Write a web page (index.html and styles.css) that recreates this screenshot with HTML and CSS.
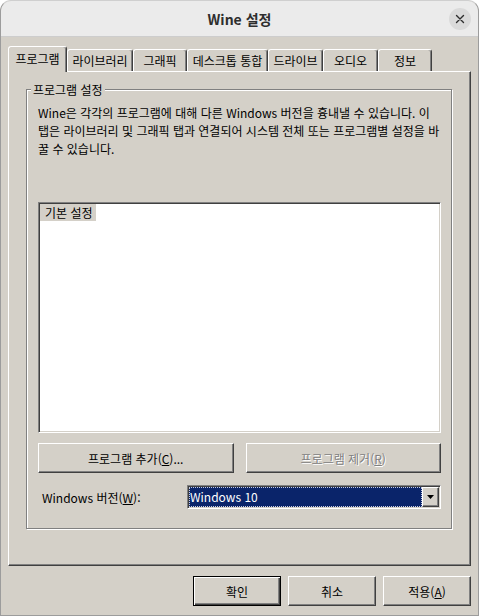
FILE: index.html
```html
<!DOCTYPE html>
<html lang="ko">
<head>
<meta charset="utf-8">
<title>Wine 설정</title>
<link rel="stylesheet" href="styles.css">
</head>
<body>
<div class="window">
  <header class="titlebar">
    <span class="title">Wine 설정</span>
    <button class="close" aria-label="닫기">
      <svg width="10" height="10" viewBox="0 0 10 10"><path d="M1.5 1.5 L8.5 8.5 M8.5 1.5 L1.5 8.5" stroke="#2e2e2e" stroke-width="1.4" stroke-linecap="round" fill="none"/></svg>
    </button>
  </header>
  <div class="client">
    <div class="tabs">
      <div class="tab tab-active">프로그램</div>
      <div class="tab">라이브러리</div>
      <div class="tab">그래픽</div>
      <div class="tab">데스크톱 통합</div>
      <div class="tab">드라이브</div>
      <div class="tab">오디오</div>
      <div class="tab">정보</div>
    </div>
    <div class="panel">
      <div class="group">
        <div class="group-title">프로그램 설정</div>
        <p class="desc">
          <span>Wine은 각각의 프로그램에 대해 다른 Windows 버전을 흉내낼 수 있습니다. 이</span>
          <span>탭은 라이브러리 및 그래픽 탭과 연결되어 시스템 전체 또는 프로그램별 설정을 바</span>
          <span>꿀 수 있습니다.</span>
        </p>
        <div class="listbox">
          <div class="item">기본 설정</div>
        </div>
        <div class="btn-row">
          <button class="btn">프로그램 추가(<u>C</u>)...</button>
          <button class="btn btn-disabled">프로그램 제거(<u>R</u>)</button>
        </div>
        <div class="ver-row">
          <span class="ver-label">Windows 버전(<u>W</u>):</span>
          <div class="combo">
            <span class="combo-value">Windows 10</span>
            <span class="combo-btn">
              <svg width="7" height="4" viewBox="0 0 7 4"><path d="M0 0 H7 L3.5 4 Z" fill="#000"/></svg>
            </span>
          </div>
        </div>
      </div>
    </div>
    <div class="dialog-buttons">
      <button class="btn dlg-btn btn-default">확인</button>
      <button class="btn dlg-btn">취소</button>
      <button class="btn dlg-btn">적용(<u>A</u>)</button>
    </div>
  </div>
</div>
</body>
</html>
```
FILE: styles.css
```css
html, body {
  margin: 0;
  background: #ffffff;
}
body {
  font-family: "Noto Sans CJK KR", "Noto Sans", sans-serif;
  font-size: 12px;
  color: #000;
}
.window {
  width: 479px;
  height: 616px;
  box-sizing: border-box;
  border: 1px solid #9c9c9c;
  border-top-color: #cfcfcf;
  border-radius: 11px 11px 0 0;
  background: #d4d0c8;
  overflow: hidden;
  display: flex;
  flex-direction: column;
}
.titlebar {
  height: 36px;
  box-sizing: border-box;
  flex: none;
  border-bottom: 1px solid #cdcdcd;
  background: #ebebeb;
  display: grid;
  grid-template-columns: 1fr auto 1fr;
  align-items: center;
}
.title {
  grid-column: 2;
  font-weight: bold;
  font-size: 14px;
  color: #2e2e2e;
}
.close {
  grid-column: 3;
  justify-self: end;
  width: 22px;
  height: 22px;
  margin-right: 7px;
  padding: 0;
  border: 0;
  border-radius: 50%;
  background: #dadada;
  display: flex;
  align-items: center;
  justify-content: center;
}
.client {
  flex: 1;
  padding: 9px 7px 0;
  display: flex;
  flex-direction: column;
}
.tabs {
  display: flex;
  align-items: flex-end;
  height: 25px;
}
.tab {
  box-sizing: border-box;
  flex: none;
  height: 22px;
  border: 1px solid;
  border-bottom: 0;
  border-color: #fff #404040 transparent #fff;
  border-radius: 3px 3px 0 0;
  box-shadow: inset -1px 0 #808080;
  display: flex;
  align-items: center;
  justify-content: center;
  white-space: nowrap;
}
.tab:nth-child(1) { width: 59px; }
.tab:nth-child(2) { width: 66px; }
.tab:nth-child(3) { width: 54px; }
.tab:nth-child(4) { width: 81px; }
.tab:nth-child(5) { width: 55px; }
.tab:nth-child(6) { width: 55px; }
.tab:nth-child(7) { width: 54px; }
.tab-active {
  height: 26px;
  margin-bottom: -1px;
  padding-bottom: 2px;
  position: relative;
  z-index: 1;
  background: #d4d0c8;
}
.panel {
  box-sizing: border-box;
  height: 495px;
  flex: none;
  border: 1px solid;
  border-color: #fff #404040 #404040 #fff;
  box-shadow: inset -1px -1px #808080;
  padding: 17px 18px 0 17px;
}
.group {
  border: 1px solid #808080;
  box-shadow: inset 1px 1px #fff, 1px 1px #fff;
  padding: 0 10px 19px 11px;
  display: flex;
  flex-direction: column;
}
.group-title {
  align-self: flex-start;
  margin: -8px 0 0 -7px;
  padding: 0 2px;
  line-height: 16px;
  background: #d4d0c8;
}
.desc {
  margin: 6px 0 0;
  line-height: 18px;
}
.desc span {
  display: block;
  white-space: nowrap;
}
.listbox {
  margin-top: 44px;
  height: 231px;
  box-sizing: border-box;
  background: #fff;
  border: 1px solid;
  border-color: #808080 #fff #fff #808080;
  box-shadow: inset 1px 1px #404040, inset -1px -1px #d4d0c8;
  padding: 1px;
}
.item {
  display: inline-block;
  background: #d4d0c8;
  padding: 0 3px 0 5px;
  line-height: 17px;
}
.btn-row {
  display: grid;
  grid-template-columns: 1fr 1fr;
  gap: 12px;
  margin-top: 10px;
}
.btn {
  height: 30px;
  box-sizing: border-box;
  padding: 0;
  font: inherit;
  color: #000;
  background: #d4d0c8;
  border: 1px solid;
  border-color: #fff #404040 #404040 #fff;
  box-shadow: inset -1px -1px #808080;
}
.btn-disabled {
  color: #808080;
  text-shadow: 1px 1px #fff;
}
.ver-row {
  display: flex;
  align-items: center;
  height: 24px;
  margin-top: 12px;
}
.ver-label {
  flex: none;
  width: 149px;
  box-sizing: border-box;
  padding-left: 4px;
  white-space: nowrap;
}
.combo {
  flex: 1;
  height: 24px;
  box-sizing: border-box;
  display: flex;
  background: #fff;
  border: 1px solid;
  border-color: #808080 #fff #fff #808080;
  box-shadow: inset 1px 1px #404040, inset -1px -1px #d4d0c8;
  padding: 1px;
}
.combo-value {
  flex: 1;
  background: #0a246a;
  color: #fff;
  line-height: 20px;
  padding-left: 1px;
  outline: 1px dotted #c8cce0;
  outline-offset: -1px;
  white-space: nowrap;
}
.combo-btn {
  flex: none;
  width: 17px;
  box-sizing: border-box;
  background: #d4d0c8;
  border: 1px solid;
  border-color: #fff #404040 #404040 #fff;
  box-shadow: inset -1px -1px #808080;
  display: flex;
  align-items: center;
  justify-content: center;
}
.dialog-buttons {
  display: flex;
  justify-content: flex-end;
  gap: 7px;
  margin-top: 10px;
}
.dlg-btn {
  width: 88px;
}
.btn-default {
  border: 1px solid #000;
  box-shadow: inset 1px 1px #fff, inset -1px -1px #404040, inset -2px -2px #808080;
}
```
